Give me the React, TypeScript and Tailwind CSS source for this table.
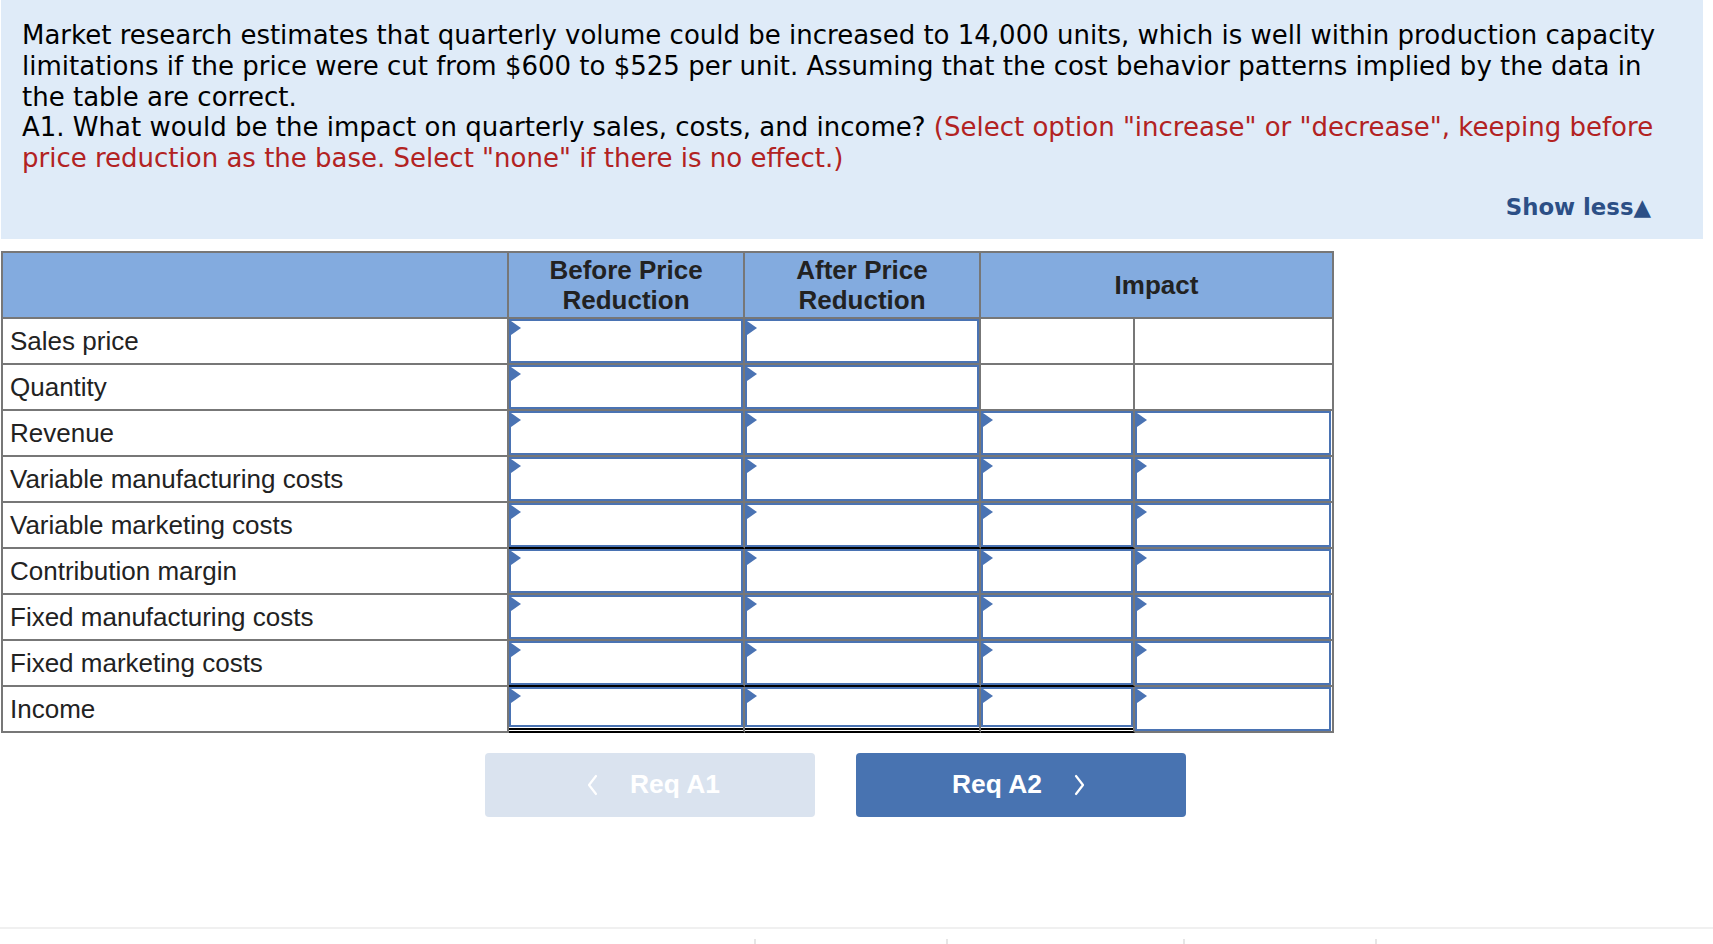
import React from "react";

const labels = [
  "Sales price",
  "Quantity",
  "Revenue",
  "Variable manufacturing costs",
  "Variable marketing costs",
  "Contribution margin",
  "Fixed manufacturing costs",
  "Fixed marketing costs",
  "Income",
];

type Bottom = "gray" | "black" | "double";

function BlueBox() {
  return (
    <div className="relative flex-1 border-2 border-[#4a73b3] bg-white">
      <div className="absolute left-0 top-0 h-0 w-0 border-y-[7px] border-l-[10px] border-y-transparent border-l-[#4a73b3]" />
    </div>
  );
}

function InputCell({ bottom, last }: { bottom: Bottom; last?: boolean }) {
  if (bottom === "double") {
    return (
      <div className="flex flex-col border-r-2 border-b-2 border-r-[#777777] border-b-black">
        <BlueBox />
        <div className="h-[1px] bg-white" />
        <div className="h-[2px] bg-black" />
        <div className="h-[1px] bg-white" />
      </div>
    );
  }
  if (bottom === "black") {
    return (
      <div className="flex flex-col border-r-2 border-b-2 border-r-[#777777] border-b-black">
        <BlueBox />
      </div>
    );
  }
  return (
    <div
      className={
        last
          ? "flex flex-col border-r-2 border-b-2 border-[#777777] pr-[1px]"
          : "flex flex-col border-r-2 border-b-2 border-[#777777]"
      }
    >
      <BlueBox />
    </div>
  );
}

function EmptyCell() {
  return <div className="border-r-2 border-b-2 border-[#777777] bg-white" />;
}

function Chevron({ dir }: { dir: "left" | "right" }) {
  return (
    <svg width="12" height="22" viewBox="0 0 12 22" fill="none">
      <polyline
        points={dir === "left" ? "10,2 3,11 10,20" : "2,2 9,11 2,20"}
        stroke="white"
        strokeWidth="2.2"
        strokeLinecap="round"
        strokeLinejoin="round"
      />
    </svg>
  );
}

export default function App() {
  return (
    <div className="h-[944px] w-full overflow-hidden bg-white">
      {/* Question panel */}
      <div className="ml-px h-[239px] w-[1702px] bg-[#dfebf8] pt-[20px] pl-[21px] pr-[52px] font-['DejaVu_Sans',sans-serif] text-[26px] leading-[30.8px] text-black">
        <div className="whitespace-nowrap">
          Market research estimates that quarterly volume could be increased to 14,000 units, which is well within production capacity
        </div>
        <div className="whitespace-nowrap">
          limitations if the price were cut from $600 to $525 per unit. Assuming that the cost behavior patterns implied by the data in
        </div>
        <div className="whitespace-nowrap">the table are correct.</div>
        <div className="whitespace-nowrap">
          A1. What would be the impact on quarterly sales, costs, and income?{" "}
          <span className="text-[#b22222]">
            (Select option "increase" or "decrease", keeping before
          </span>
        </div>
        <div className="whitespace-nowrap text-[#b22222]">
          price reduction as the base. Select "none" if there is no effect.)
        </div>
        <div className="mt-[18px] flex justify-end">
          <span className="text-[22.8px] font-bold leading-[31px] text-[#2c4f86]">
            Show less▲
          </span>
        </div>
      </div>

      {/* Table */}
      <div className="ml-px mt-[12px] grid w-fit grid-cols-[506px_236px_236px_154px_199px] grid-rows-[66px_repeat(9,46px)] border-t-2 border-l-2 border-[#777777] font-['Liberation_Sans',Arial,sans-serif] text-[#222222]">
        <div className="border-r-2 border-b-2 border-[#777777] bg-[#83abdf]" />
        <div className="flex items-center justify-center border-r-2 border-b-2 border-[#777777] bg-[#83abdf] text-center text-[26px] font-bold leading-[30px]">
          Before Price
          <br />
          Reduction
        </div>
        <div className="flex items-center justify-center border-r-2 border-b-2 border-[#777777] bg-[#83abdf] text-center text-[26px] font-bold leading-[30px]">
          After Price
          <br />
          Reduction
        </div>
        <div className="col-span-2 flex items-center justify-center border-r-2 border-b-2 border-[#777777] bg-[#83abdf] text-[26px] font-bold leading-[30px]">
          Impact
        </div>

        {labels.map((label, i) => {
          const bottom: Bottom =
            i === 8 ? "double" : i === 4 || i === 7 ? "black" : "gray";
          return (
            <React.Fragment key={label}>
              <div className="flex items-center border-r-2 border-b-2 border-[#777777] bg-white pl-[7px] text-[26px] leading-[30px]">
                {label}
              </div>
              <InputCell bottom={bottom} />
              <InputCell bottom={bottom} />
              {i < 2 ? (
                <>
                  <EmptyCell />
                  <EmptyCell />
                </>
              ) : (
                <>
                  <InputCell bottom={bottom} />
                  <InputCell bottom="gray" last />
                </>
              )}
            </React.Fragment>
          );
        })}
      </div>

      {/* Navigation buttons */}
      <div className="mt-[20px] ml-[485px] flex gap-[41px] font-['Liberation_Sans',Arial,sans-serif] text-[26.4px] font-bold text-white">
        <button className="flex h-[64px] w-[330px] items-center justify-center gap-[32px] rounded-[4px] bg-[#dae3ef] pl-[6px]">
          <Chevron dir="left" />
          <span>Req A1</span>
        </button>
        <button className="flex h-[64px] w-[330px] items-center justify-center gap-[32px] rounded-[4px] bg-[#4873b1] pr-[4px]">
          <span>Req A2</span>
          <Chevron dir="right" />
        </button>
      </div>

      {/* Bottom divider */}
      <div className="mt-[110px] h-[2px] w-full bg-[#f0f0f0]" />
      <div className="mt-[10px] flex">
        <div className="ml-[754px] h-[6px] w-[2px] bg-[#e6e6e6]" />
        <div className="ml-[190px] h-[6px] w-[2px] bg-[#e6e6e6]" />
        <div className="ml-[235px] h-[6px] w-[2px] bg-[#e6e6e6]" />
        <div className="ml-[190px] h-[6px] w-[2px] bg-[#e6e6e6]" />
      </div>
    </div>
  );
}
